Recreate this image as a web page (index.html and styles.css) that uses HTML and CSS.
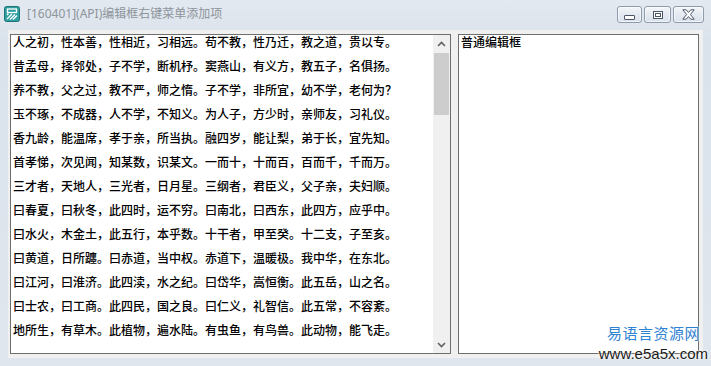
FILE: index.html
```html
<!DOCTYPE html>
<html lang="zh-CN">

<head>
    <meta charset="UTF-8">
    <meta name="viewport" content="width=device-width, initial-scale=1.0">
    <title>[160401](API)编辑框右键菜单添加项</title>
    <link rel="stylesheet" href="styles.css">
</head>

<body>
    <div class="window">
        <!-- 标题栏 -->
        <div class="titlebar">
            <svg class="app-icon" width="16" height="16" viewBox="0 0 16 16">
                <rect x="0.5" y="0.5" width="15" height="15" rx="2" fill="#2e9ea0" stroke="#1f7375"/>
                <rect x="3.5" y="3" width="9" height="3.5" fill="none" stroke="#fff" stroke-width="1.3"/>
                <path d="M3 13 L8 8 M6 13.5 L11 8.5 M9 13.5 L13 9.5 M3 9 L4.5 7.5" stroke="#fff" stroke-width="1.4" fill="none"/>
            </svg>
            <span class="title">[160401](API)编辑框右键菜单添加项</span>
            <div class="caption-buttons">
                <div class="cap-btn cap-min"><span class="glyph-min"></span></div>
                <div class="cap-btn cap-max">
                    <svg width="10" height="8" viewBox="0 0 10 8">
                        <rect x="0.5" y="0.5" width="9" height="7" fill="#fff" stroke="#4a5566"/>
                        <rect x="2.5" y="2.5" width="5" height="3" fill="#fff" stroke="#4a5566"/>
                    </svg>
                </div>
                <div class="cap-btn cap-close">
                    <svg width="13" height="11" viewBox="0 0 13 11">
                        <path d="M0.8 0.8 L4.2 0.8 L6.5 3.4 L8.8 0.8 L12.2 0.8 L8.4 5.5 L12.2 10.2 L8.8 10.2 L6.5 7.6 L4.2 10.2 L0.8 10.2 L4.6 5.5 Z" fill="#fff" stroke="#4a5566" stroke-width="1" stroke-linejoin="round"/>
                    </svg>
                </div>
            </div>
        </div>

        <!-- 客户区 -->
        <div class="client">
            <div class="edit edit-main">
                <div class="edit-text">
                    <div class="line">人之初，性本善，性相近，习相远。苟不教，性乃迁，教之道，贵以专。</div>
                    <div class="line">昔孟母，择邻处，子不学，断机杼。窦燕山，有义方，教五子，名俱扬。</div>
                    <div class="line">养不教，父之过，教不严，师之惰。子不学，非所宜，幼不学，老何为？</div>
                    <div class="line">玉不琢，不成器，人不学，不知义。为人子，方少时，亲师友，习礼仪。</div>
                    <div class="line">香九龄，能温席，孝于亲，所当执。融四岁，能让梨，弟于长，宜先知。</div>
                    <div class="line">首孝悌，次见闻，知某数，识某文。一而十，十而百，百而千，千而万。</div>
                    <div class="line">三才者，天地人，三光者，日月星。三纲者，君臣义，父子亲，夫妇顺。</div>
                    <div class="line">曰春夏，曰秋冬，此四时，运不穷。曰南北，曰西东，此四方，应乎中。</div>
                    <div class="line">曰水火，木金土，此五行，本乎数。十干者，甲至癸。十二支，子至亥。</div>
                    <div class="line">曰黄道，日所躔。曰赤道，当中权。赤道下，温暖极。我中华，在东北。</div>
                    <div class="line">曰江河，曰淮济。此四渎，水之纪。曰岱华，嵩恒衡。此五岳，山之名。</div>
                    <div class="line">曰士农，曰工商。此四民，国之良。曰仁义，礼智信。此五常，不容紊。</div>
                    <div class="line">地所生，有草木。此植物，遍水陆。有虫鱼，有鸟兽。此动物，能飞走。</div>
                </div>
                <div class="vscroll">
                    <div class="scroll-arrow">
                        <svg width="9" height="6" viewBox="0 0 9 6"><path d="M1 5 L4.5 1.5 L8 5" fill="none" stroke="#606060" stroke-width="1.6"/></svg>
                    </div>
                    <div class="scroll-track">
                        <div class="scroll-thumb"></div>
                    </div>
                    <div class="scroll-arrow">
                        <svg width="9" height="6" viewBox="0 0 9 6"><path d="M1 1 L4.5 4.5 L8 1" fill="none" stroke="#606060" stroke-width="1.6"/></svg>
                    </div>
                </div>
            </div>
            <div class="edit edit-side">
                <div class="edit-text">
                    <div class="line">普通编辑框</div>
                </div>
            </div>
        </div>

        <!-- 水印 -->
        <div class="watermark">
            <div class="wm-name">易语言资源网</div>
            <div class="wm-url">www.e5a5x.com</div>
        </div>
    </div>
</body>

</html>
```

FILE: styles.css
```css
body {
    margin: 0;
    padding: 0;
    width: 711px;
    height: 366px;
    overflow: hidden;
    font-family: "Noto Sans", "Noto Sans CJK SC", sans-serif;
    background-color: #ffffff;
}

.window {
    position: relative;
    height: 366px;
    display: flex;
    flex-direction: column;
    background: linear-gradient(#e3e9f0, #dae2eb 40px, #dfe6ee);
    box-sizing: border-box;
}

/* 标题栏 */
.titlebar {
    height: 30px;
    display: flex;
    align-items: flex-start;
    padding: 6px 7px 0 4px;
    box-sizing: border-box;
}

.app-icon {
    flex-shrink: 0;
}

.title {
    margin-left: 7px;
    font-size: 12px;
    line-height: 16px;
    color: #8d949b;
    white-space: nowrap;
}

.caption-buttons {
    margin-left: auto;
    display: flex;
    gap: 2px;
}

.cap-btn {
    height: 17px;
    border: 1px solid #8e9bad;
    border-radius: 3px;
    background: linear-gradient(#f4f7fa, #e4eaf1 50%, #d9e1ea);
    box-shadow: inset 0 0 0 1px rgba(255, 255, 255, 0.6);
    display: flex;
    justify-content: center;
    align-items: center;
    box-sizing: border-box;
}

.cap-min {
    width: 25px;
}

.cap-max {
    width: 27px;
}

.cap-close {
    width: 31px;
}

.glyph-min {
    width: 9px;
    height: 3px;
    margin-top: 5px;
    border: 1px solid #4a5566;
    border-radius: 1px;
    background-color: #fff;
}

/* 客户区 */
.client {
    flex: 1;
    margin: 0 8px 8px;
    padding: 4px 4px 4px 2px;
    background-color: #f0f0f0;
    display: flex;
    gap: 7px;
}

.edit {
    border: 1px solid #6e6e6e;
    background-color: #fff;
    box-sizing: border-box;
    height: 320px;
    overflow: hidden;
}

.edit-main {
    width: 441px;
    display: flex;
}

.edit-side {
    width: 241px;
}

.edit-text {
    flex: 1;
    padding-left: 2px;
    font-family: "Noto Sans CJK SC", sans-serif;
    font-size: 12px;
    font-weight: 500;
    color: #000;
}

.line {
    height: 24px;
    line-height: 14px;
    white-space: nowrap;
}

/* 滚动条 */
.vscroll {
    width: 17px;
    display: flex;
    flex-direction: column;
    background-color: #f0f0f0;
}

.scroll-arrow {
    height: 17px;
    display: flex;
    justify-content: center;
    align-items: center;
}

.scroll-track {
    flex: 1;
    padding-top: 1px;
}

.scroll-thumb {
    height: 62px;
    margin: 0 1px;
    background-color: #cdcdcd;
}

/* 水印 */
.watermark {
    position: absolute;
    right: 3px;
    bottom: 4px;
    text-align: center;
}

.wm-name {
    font-family: "Noto Sans CJK SC", sans-serif;
    font-size: 15px;
    line-height: 17px;
    letter-spacing: 0.5px;
    color: #2f82d2;
    text-shadow: 0 0 2px #fff, 0 0 2px #fff;
    margin-bottom: 5px;
}

.wm-url {
    font-family: "Liberation Sans", Arial, sans-serif;
    font-size: 15px;
    line-height: 16px;
    color: #1a1a1a;
    text-shadow: 0 0 2px #fff, 0 0 2px #fff;
}
```
